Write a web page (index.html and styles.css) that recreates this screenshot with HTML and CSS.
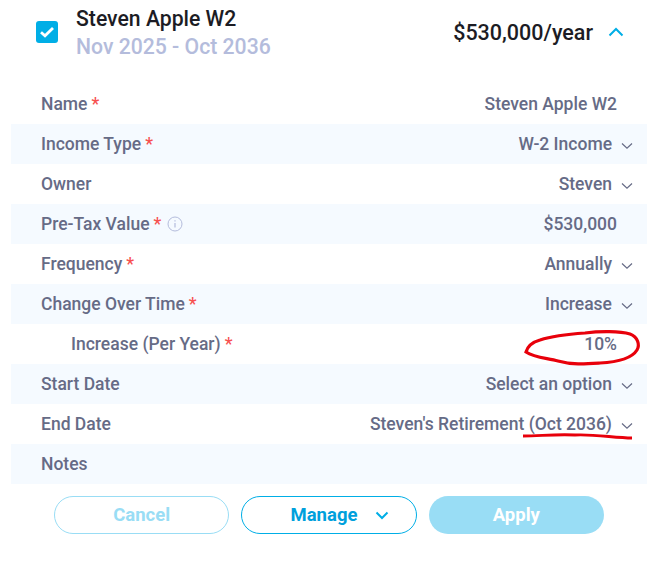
FILE: index.html
```html
<!DOCTYPE html>
<html lang="en">
<head>
    <meta charset="UTF-8">
    <title>Steven Apple W2</title>
    <link rel="stylesheet" href="styles.css">
</head>
<body>
    <div class="card">
        <div class="header">
            <span class="checkbox">
                <svg width="16" height="14" viewBox="0 0 16 14"><path d="M2 7.200 6 10.800 14 3" fill="none" stroke="#fff" stroke-width="2.800"/></svg>
            </span>
            <div class="header-text">
                <div class="title">Steven Apple W2</div>
                <div class="dates">Nov 2025 - Oct 2036</div>
            </div>
            <div class="amount">$530,000/year</div>
            <svg class="collapse" width="16" height="10" viewBox="0 0 16 10"><path d="M1.500 8.500 8 2l6.500 6.500" fill="none" stroke="#00aee6" stroke-width="2"/></svg>
        </div>

        <div class="rows">
            <div class="row">
                <span class="label">Name <span class="req">*</span></span>
                <span class="value plain">Steven Apple W2</span>
            </div>
            <div class="row">
                <span class="label">Income Type <span class="req">*</span></span>
                <span class="value">W-2 Income <svg class="caret" width="12" height="8" viewBox="0 0 12 8"><path d="M1 1.500 6 6.200l5-4.700" fill="none" stroke="#666b86" stroke-width="1.200"/></svg></span>
            </div>
            <div class="row">
                <span class="label">Owner</span>
                <span class="value">Steven <svg class="caret" width="12" height="8" viewBox="0 0 12 8"><path d="M1 1.500 6 6.200l5-4.700" fill="none" stroke="#666b86" stroke-width="1.200"/></svg></span>
            </div>
            <div class="row">
                <span class="label">Pre-Tax Value <span class="req">*</span>
                    <svg class="info" width="16" height="16" viewBox="0 0 16 16"><circle cx="8" cy="8" r="7" fill="none" stroke="#b4bcdc" stroke-width="1"/><path d="M8 7v4.500M8 4.200v1.300" stroke="#b4bcdc" stroke-width="1.200"/></svg>
                </span>
                <span class="value plain">$530,000</span>
            </div>
            <div class="row">
                <span class="label">Frequency <span class="req">*</span></span>
                <span class="value">Annually <svg class="caret" width="12" height="8" viewBox="0 0 12 8"><path d="M1 1.500 6 6.200l5-4.700" fill="none" stroke="#666b86" stroke-width="1.200"/></svg></span>
            </div>
            <div class="row">
                <span class="label">Change Over Time <span class="req">*</span></span>
                <span class="value">Increase <svg class="caret" width="12" height="8" viewBox="0 0 12 8"><path d="M1 1.500 6 6.200l5-4.700" fill="none" stroke="#666b86" stroke-width="1.200"/></svg></span>
            </div>
            <div class="row">
                <span class="label indent">Increase (Per Year) <span class="req">*</span></span>
                <span class="value plain">10%</span>
            </div>
            <div class="row">
                <span class="label">Start Date</span>
                <span class="value">Select an option <svg class="caret" width="12" height="8" viewBox="0 0 12 8"><path d="M1 1.500 6 6.200l5-4.700" fill="none" stroke="#666b86" stroke-width="1.200"/></svg></span>
            </div>
            <div class="row">
                <span class="label">End Date</span>
                <span class="value">Steven's Retirement (Oct 2036) <svg class="caret" width="12" height="8" viewBox="0 0 12 8"><path d="M1 1.500 6 6.200l5-4.700" fill="none" stroke="#666b86" stroke-width="1.200"/></svg></span>
            </div>
            <div class="row">
                <span class="label">Notes</span>
            </div>
        </div>

        <div class="actions">
            <button class="btn cancel">Cancel</button>
            <button class="btn manage">Manage
                <svg width="14" height="9" viewBox="0 0 14 9"><path d="M1.500 1.500 7 7l5.500-5.500" fill="none" stroke="#00aee6" stroke-width="2"/></svg>
            </button>
            <button class="btn apply">Apply</button>
        </div>
    </div>

    <!-- red marker scribbles drawn on top of the screenshot -->
    <svg class="scribble" width="662" height="561" viewBox="0 0 662 561">
        <path d="M526 352C528 345 533 342 540 340C552 336 570 334 585 333C600 331 620 331 630 334C638 337 640 345 637 350C632 358 620 362 600 363C585 364 572 365 558 361C548 358 535 358 526 352Z" fill="none" stroke="#e8000b" stroke-width="3.200"/>
        <path d="M523 436C540 436 555 434 575 435C595 434 615 438 632 438" fill="none" stroke="#e8000b" stroke-width="2.800"/>
    </svg>
</body>
</html>
```

FILE: styles.css
```css
body {
    margin: 0;
    background-color: #ffffff;
    font-family: 'Roboto', sans-serif;
    font-weight: 500;
    font-size: 17.5px;
    color: #666b86;
}

.card {
    width: 636px;
    margin-left: 11px;
}

.header {
    display: flex;
    align-items: center;
    height: 84px;
    box-sizing: border-box;
    padding: 0 23px 20px 25px;
}

.checkbox {
    display: flex;
    justify-content: center;
    align-items: center;
    width: 22px;
    height: 22px;
    border-radius: 3px;
    background-color: #00aee6;
    margin-right: 18px;
}

.header-text {
    flex: 1;
    padding-top: 1px;
}

.title {
    font-size: 21.2px;
    line-height: 28px;
    color: #1c1c24;
}

.dates {
    font-size: 21.2px;
    line-height: 28px;
    color: #b4bcdc;
}

.amount {
    font-size: 21.5px;
    color: #1c1c24;
    margin-right: 15px;
}

.collapse {
    display: block;
}

.row {
    display: flex;
    justify-content: space-between;
    align-items: center;
    height: 40px;
    padding: 0 14px 0 30px;
}

.row:nth-child(even) {
    background-color: #f5faff;
}

.label {
    display: flex;
    align-items: center;
    gap: 4px;
}

.indent {
    margin-left: 30px;
}

.req {
    color: #f7504f;
}

.info {
    margin-left: 2px;
}

.value {
    display: flex;
    align-items: center;
}

.value.plain {
    margin-right: 16px;
}

.caret {
    margin-left: 9px;
    margin-top: 4px;
}

.actions {
    display: flex;
    justify-content: center;
    gap: 12px;
    margin-top: 12px;
}

.btn {
    display: flex;
    justify-content: center;
    align-items: center;
    width: 175.3px;
    height: 38px;
    border-radius: 19px;
    box-sizing: border-box;
    font-family: 'Roboto', sans-serif;
    font-weight: 700;
    font-size: 18.5px;
    background-color: #ffffff;
}

.cancel {
    border: 1px solid #99ddf5;
    color: #99ddf5;
}

.manage {
    border: 1px solid #00aee6;
    color: #00a0dc;
    gap: 18px;
    padding-left: 28px;
}

.apply {
    border: none;
    background-color: #99ddf5;
    color: #ffffff;
}

.scribble {
    position: absolute;
    left: 0;
    top: 0;
    pointer-events: none;
}
```
